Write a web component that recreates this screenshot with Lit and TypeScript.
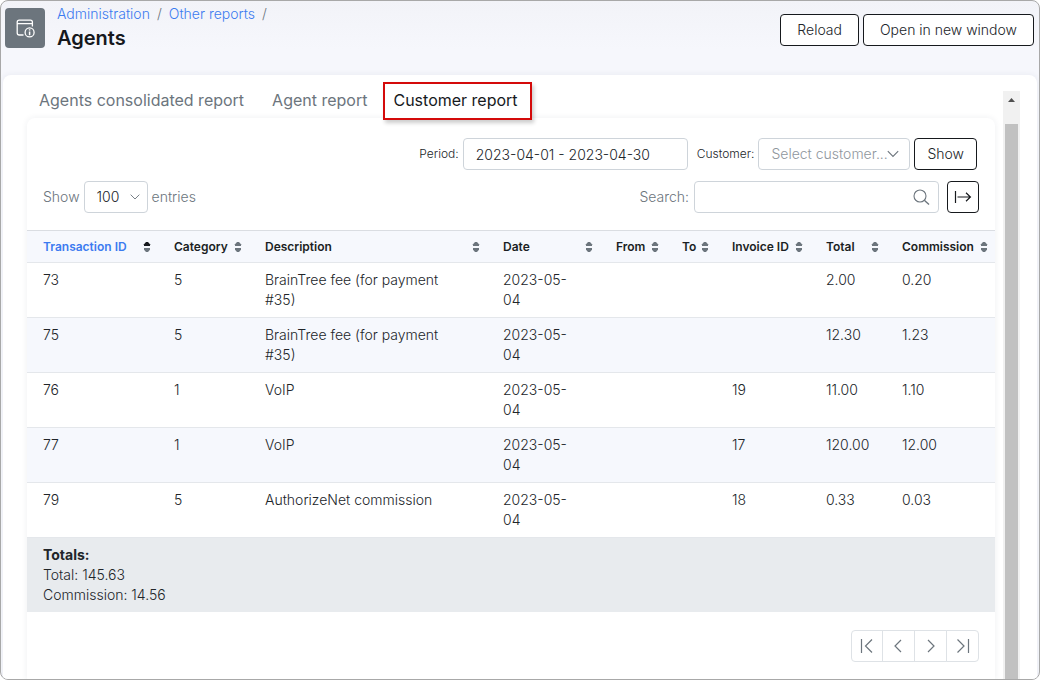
import { LitElement, html, css, svg } from "lit";
import { customElement, property, state } from "lit/decorators.js";
import { classMap } from "lit/directives/class-map.js";

interface Column {
  key: string;
  label: string;
}

interface Transaction {
  id: string;
  category: string;
  description: string;
  date: string;
  invoice: string;
  total: string;
  commission: string;
}

const COLUMNS: Column[] = [
  { key: "id", label: "Transaction ID" },
  { key: "category", label: "Category" },
  { key: "description", label: "Description" },
  { key: "date", label: "Date" },
  { key: "from", label: "From" },
  { key: "to", label: "To" },
  { key: "invoice", label: "Invoice ID" },
  { key: "total", label: "Total" },
  { key: "commission", label: "Commission" },
];

const ROWS: Transaction[] = [
  { id: "73", category: "5", description: "BrainTree fee (for payment #35)", date: "2023-05-04", invoice: "", total: "2.00", commission: "0.20" },
  { id: "75", category: "5", description: "BrainTree fee (for payment #35)", date: "2023-05-04", invoice: "", total: "12.30", commission: "1.23" },
  { id: "76", category: "1", description: "VoIP", date: "2023-05-04", invoice: "19", total: "11.00", commission: "1.10" },
  { id: "77", category: "1", description: "VoIP", date: "2023-05-04", invoice: "17", total: "120.00", commission: "12.00" },
  { id: "79", category: "5", description: "AuthorizeNet commission", date: "2023-05-04", invoice: "18", total: "0.33", commission: "0.03" },
];

const chevronDown = html`<svg class="chevron" width="12" height="8" viewBox="0 0 12 8" aria-hidden="true">
  <path d="M0.8 1.2 L6 6.4 L11.2 1.2" fill="none" stroke="currentColor" stroke-width="1.1" />
</svg>`;

const PAGER = [
  { label: "First page", icon: svg`<path d="M1.5 1 V15 M12 1.5 L5.5 8 L12 14.5" />` },
  { label: "Previous page", icon: svg`<path d="M10 2 L4 8 L10 14" />` },
  { label: "Next page", icon: svg`<path d="M5 2 L11 8 L5 14" />` },
  { label: "Last page", icon: svg`<path d="M2.5 1.5 L9 8 L2.5 14.5 M13.5 1 V15" />` },
];

@customElement("report-table")
class ReportTable extends LitElement {
  @property({ attribute: false }) rows: Transaction[] = [];
  @state() private sortKey = "id";

  static styles = css`
    :host {
      display: block;
    }
    .table {
      width: 100%;
      border-collapse: separate;
      border-spacing: 0;
      table-layout: fixed;
      font-size: 14px;
      line-height: 20px;
    }
    .col-id { width: 131px; }
    .col-category { width: 91px; }
    .col-date { width: 113px; }
    .col-from { width: 66px; }
    .col-to { width: 50px; }
    .col-invoice { width: 94px; }
    .col-total { width: 76px; }
    .col-commission { width: 109px; }
    .head {
      height: 31px;
      padding: 0;
      background: #f6f8fd;
      border-top: 1px solid #dadde2;
      border-bottom: 1px solid #e4e7eb;
      text-align: left;
    }
    .sort {
      display: flex;
      align-items: center;
      justify-content: space-between;
      width: 100%;
      height: 31px;
      padding: 0 7px 0 16px;
      border: 0;
      background: none;
      color: #1b1f24;
      font: 600 12px/20px Inter, sans-serif;
      white-space: nowrap;
      cursor: pointer;
    }
    .sorted {
      color: #3c7bf0;
    }
    .arrows {
      flex: none;
      fill: #6c757d;
    }
    .sorted .up {
      fill: #16191d;
    }
    .cell {
      padding: 7px 24px 7px 16px;
      border-bottom: 1px solid #e4e7eb;
      vertical-align: top;
    }
    .row:nth-child(even) .cell {
      background: #f6f8fd;
    }
    .totals {
      padding: 7px 16px;
      background: #e8ebee;
    }
    .totals-title {
      font-weight: 700;
    }
  `;

  render() {
    return html`<table class="table">
      <colgroup>
        ${COLUMNS.map((c) => html`<col class="col-${c.key}" />`)}
      </colgroup>
      <thead>
        <tr>
          ${COLUMNS.map(
            (c) => html`<th class="head" scope="col">
              <button
                class=${classMap({ sort: true, sorted: c.key === this.sortKey })}
                @click=${() => (this.sortKey = c.key)}
              >
                ${c.label}
                <svg class="arrows" width="8" height="10" viewBox="0 0 8 10" aria-hidden="true">
                  <path class="up" d="M3 0 H5 L7 2.2 V4 H1 V2.2 Z" />
                  <path d="M1 6 H7 V7.8 L5 10 H3 L1 7.8 Z" />
                </svg>
              </button>
            </th>`
          )}
        </tr>
      </thead>
      <tbody>
        ${this.rows.map(
          (r) => html`<tr class="row">
            ${COLUMNS.map((c) => html`<td class="cell">${(r as any)[c.key] ?? ""}</td>`)}
          </tr>`
        )}
      </tbody>
      <tfoot>
        <tr>
          <td class="totals" colspan="9">
            <div class="totals-title">Totals:</div>
            <div>Total: 145.63</div>
            <div>Commission: 14.56</div>
          </td>
        </tr>
      </tfoot>
    </table>`;
  }
}

@customElement("app-root")
class AppRoot extends LitElement {
  @state() private tab = "Customer report";

  static styles = css`
    :host {
      display: block;
      background: #fff;
      color: #212529;
      font: 300 14px/20px Inter, sans-serif;
    }
    *,
    *::before {
      box-sizing: border-box;
    }
    .frame {
      display: flex;
      flex-direction: column;
      height: 100vh;
      overflow: hidden;
      border: 1px solid #a8a8a8;
      border-radius: 8px;
      background: linear-gradient(#f2f3f8, #f6f7fc 48px);
    }
    .top {
      display: flex;
      flex: none;
      justify-content: space-between;
      height: 74px;
      padding: 0 5px 0 4px;
    }
    .identity {
      display: flex;
      gap: 12px;
      padding-top: 3px;
    }
    .badge {
      display: grid;
      place-items: center;
      width: 40px;
      height: 40px;
      margin-top: 4px;
      border-radius: 4px;
      background: #6c757d;
    }
    .crumbs {
      display: flex;
      gap: 7px;
      color: #6c757d;
    }
    .crumb {
      color: #3c7bf0;
      text-decoration: none;
    }
    .title {
      margin: 0;
      color: #16191d;
      font-size: 20px;
      font-weight: 600;
      line-height: 28px;
    }
    .actions {
      display: flex;
      gap: 4px;
      padding-top: 13px;
    }
    .button {
      height: 32px;
      padding: 0 16px;
      border: 1px solid #16191d;
      border-radius: 4px;
      background: #fff;
      color: #212529;
      font: inherit;
      cursor: pointer;
    }
    .compact {
      padding: 0 12px;
    }
    .page {
      display: flex;
      flex: 1;
      min-height: 0;
      gap: 8px;
      margin: 0 2px;
      padding: 7px 17px 0 24px;
      border-radius: 8px 8px 0 0;
      background: #fff;
      box-shadow: 0 0 6px rgba(40, 50, 80, 0.07);
    }
    .main {
      display: flex;
      flex: 1;
      flex-direction: column;
      min-width: 0;
    }
    .tabs {
      display: flex;
      height: 36px;
    }
    .tab {
      padding: 0 16px 0 12px;
      color: #6c757d;
      font-size: 16px;
      font-weight: 400;
      line-height: 36px;
      text-decoration: none;
      white-space: nowrap;
    }
    .active {
      z-index: 1;
      height: 38px;
      padding: 0 12px 0 8px;
      border: 2px solid #d40a0a;
      background: #fff;
      box-shadow: 2px 3px 4px rgba(0, 0, 0, 0.2);
      color: #16191d;
      line-height: 32px;
    }
    .panel {
      flex: 1;
      border-radius: 8px 8px 0 0;
      background: #fff;
      box-shadow: 0 0 6px rgba(40, 50, 80, 0.08);
    }
    .filters,
    .tools {
      display: flex;
      align-items: center;
      gap: 4px;
      height: 32px;
    }
    .filters {
      justify-content: flex-end;
      margin: 20px 18px 0 16px;
    }
    .tools {
      margin: 11px 16px 17px;
      color: #6c757d;
    }
    .label {
      font-size: 12px;
    }
    .label-next {
      margin-left: 5px;
    }
    .field {
      width: 100%;
      height: 32px;
      margin: 0;
      padding: 0 12px;
      border: 1px solid #ced4da;
      border-radius: 4px;
      background: #fff;
      color: #212529;
      font: inherit;
      appearance: none;
    }
    .wrap {
      position: relative;
      flex: none;
    }
    .period { width: 225px; }
    .customer { width: 152px; }
    .length { width: 64px; }
    .search { width: 245px; }
    .placeholder {
      color: #8f969d;
    }
    .chevron,
    .lens {
      position: absolute;
      top: 12px;
      right: 11px;
      color: #6c757d;
      pointer-events: none;
    }
    .length .chevron {
      right: 8px;
      width: 10px;
    }
    .lens {
      top: 8px;
      right: 9px;
    }
    .find {
      display: flex;
      align-items: center;
      gap: 5px;
      margin-left: auto;
    }
    .export {
      display: grid;
      place-items: center;
      width: 32px;
      margin-left: 4px;
      padding: 0;
    }
    .pager {
      display: flex;
      justify-content: flex-end;
      padding: 18px 16px;
    }
    .page-button {
      display: grid;
      place-items: center;
      width: 33px;
      height: 32px;
      margin-left: -1px;
      padding: 0;
      border: 1px solid #dee2e6;
      background: #fff;
      cursor: pointer;
    }
    .page-button:first-child {
      width: 32px;
      border-radius: 4px 0 0 4px;
    }
    .page-button:last-child {
      border-radius: 0 4px 4px 0;
    }
    .page-icon {
      fill: none;
      stroke: #6c757d;
      stroke-width: 1.2;
    }
    .scrollbar {
      display: flex;
      flex: none;
      flex-direction: column;
      width: 17px;
      margin-top: 9px;
      background: #f1f1f1;
    }
    .scroll-up {
      display: grid;
      place-items: center;
      height: 17px;
    }
    .thumb {
      flex: 1;
      margin: 16px 2px 0;
      background: #c1c1c1;
    }
  `;

  render() {
    const tabs = ["Agents consolidated report", "Agent report", "Customer report"];
    return html`<div class="frame">
      <header class="top">
        <div class="identity">
          <div class="badge">
            <svg width="20" height="20" viewBox="0 0 20 20" fill="none" stroke="#fff" stroke-width="1.3" aria-hidden="true">
              <path d="M8.5 17 H4.2 Q2.2 17 2.2 15 V4.2 Q2.2 2.2 4.2 2.2 H15.4 Q17.4 2.2 17.4 4.2 V8.6 M2.2 5.6 H17.4" />
              <circle cx="14.6" cy="14.4" r="4.5" />
              <path d="M14.6 13.4 V17.2 M14.6 11.3 V12.5" stroke-width="1.5" />
            </svg>
          </div>
          <div>
            <nav class="crumbs" aria-label="Breadcrumb">
              <a class="crumb" href="#administration">Administration</a><span>/</span>
              <a class="crumb" href="#reports">Other reports</a><span>/</span>
            </nav>
            <h1 class="title">Agents</h1>
          </div>
        </div>
        <div class="actions">
          <button class="button">Reload</button>
          <button class="button">Open in new window</button>
        </div>
      </header>
      <main class="page">
        <div class="main">
          <nav class="tabs" aria-label="Reports">
            ${tabs.map(
              (t) => html`<a
                class=${classMap({ tab: true, active: t === this.tab })}
                href="#report"
                @click=${() => (this.tab = t)}
                >${t}</a
              >`
            )}
          </nav>
          <section class="panel">
            <div class="filters">
              <label class="label" for="period">Period:</label>
              <div class="wrap period">
                <input id="period" class="field" type="text" .value=${"2023-04-01 - 2023-04-30"} />
              </div>
              <label class="label label-next" for="customer">Customer:</label>
              <div class="wrap customer">
                <select id="customer" class="field placeholder">
                  <option>Select customer...</option>
                </select>
                ${chevronDown}
              </div>
              <button class="button compact">Show</button>
            </div>
            <div class="tools">
              <label for="length">Show</label>
              <div class="wrap length">
                <select id="length" class="field">
                  <option>100</option>
                </select>
                ${chevronDown}
              </div>
              <span>entries</span>
              <div class="find">
                <label for="search">Search:</label>
                <div class="wrap search">
                  <input id="search" class="field" type="text" />
                  <svg class="lens" width="17" height="17" viewBox="0 0 17 17" fill="none" stroke="currentColor" aria-hidden="true">
                    <circle cx="7" cy="7" r="6" stroke-width="1.1" />
                    <path d="M11.3 11.3 L16 15.6" stroke-width="1.4" />
                  </svg>
                </div>
              </div>
              <button class="button export" aria-label="Export">
                <svg width="18" height="14" viewBox="0 0 18 14" fill="none" stroke="#16191d" stroke-width="1.2" aria-hidden="true">
                  <path d="M1.5 1 V13 M3.5 7 H16.5 M12 2.8 L16.4 7 L12 11.2" />
                </svg>
              </button>
            </div>
            <report-table .rows=${ROWS}></report-table>
            <nav class="pager" aria-label="Pages">
              ${PAGER.map(
                (p) => html`<button class="page-button" aria-label=${p.label}>
                  <svg class="page-icon" width="15" height="16" viewBox="0 0 15 16">${p.icon}</svg>
                </button>`
              )}
            </nav>
          </section>
        </div>
        <div class="scrollbar" aria-hidden="true">
          <div class="scroll-up">
            <svg width="7" height="4" viewBox="0 0 7 4"><path d="M0 4 L3.5 0 L7 4 Z" fill="#505050" /></svg>
          </div>
          <div class="thumb"></div>
        </div>
      </main>
    </div>`;
  }
}
